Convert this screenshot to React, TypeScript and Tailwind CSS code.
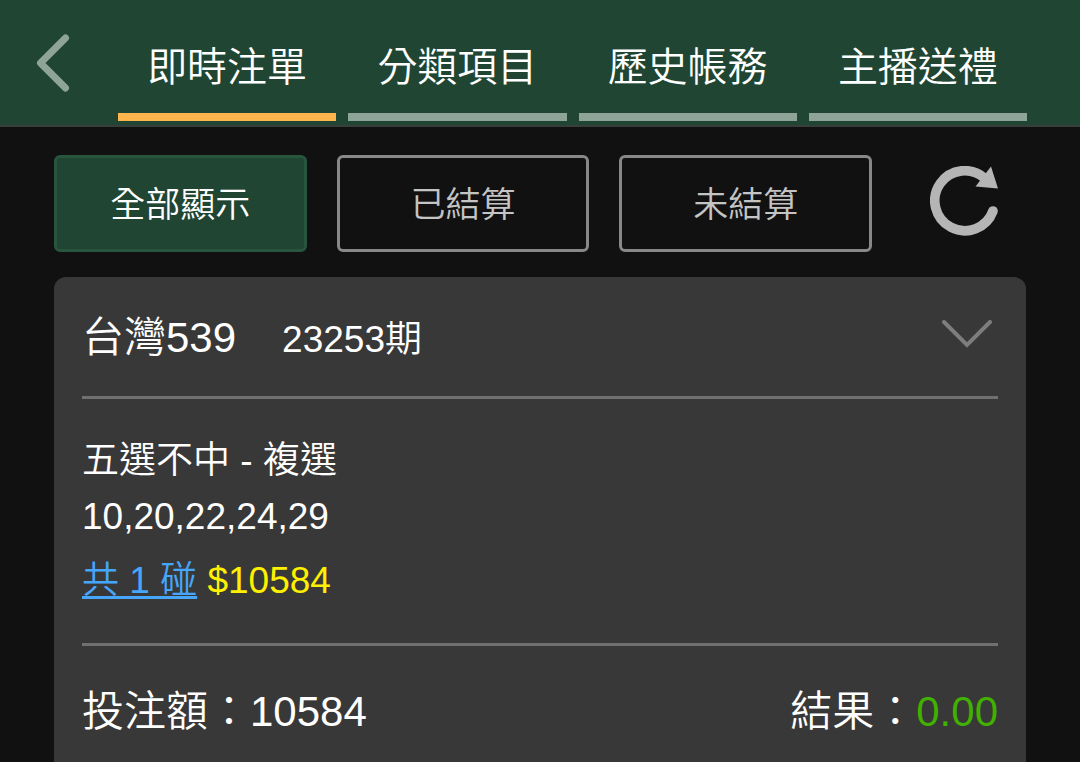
import React, { useState } from 'react';
import { clsx } from 'clsx';

const TABS = ['即時注單', '分類項目', '歷史帳務', '主播送禮'];
const FILTERS = ['全部顯示', '已結算', '未結算'];

const BackIcon = () => (
  <svg width="36" height="60" viewBox="0 0 36 60" fill="none" aria-hidden="true">
    <path d="M30.500 5 L5.500 30 L30.500 55" stroke="#8fa498" strokeWidth="7" strokeLinecap="round" strokeLinejoin="round" />
  </svg>
);

const RefreshIcon = () => (
  <svg width="68" height="70" viewBox="0 0 68 70" aria-hidden="true">
    <path d="M63 45 A30 30 0 1 1 55 12.500" fill="none" stroke="#b5b5b5" strokeWidth="9.600" />
    <circle cx="63" cy="45" r="4.800" fill="#b5b5b5" />
    <path d="M61 0.500 L68 22.500 L45.500 20.500 Z" fill="#b5b5b5" />
  </svg>
);

const ChevronIcon = () => (
  <svg width="50" height="28" viewBox="0 0 50 28" fill="none" aria-hidden="true">
    <path d="M2 2 L25 25 L48 2" stroke="#7d7d7d" strokeWidth="4" strokeLinecap="round" />
  </svg>
);

interface HeaderProps {
  active: string;
  onSelect: (tab: string) => void;
}

const Header: React.FC<HeaderProps> = ({ active, onSelect }) => (
  <header className="flex items-end border-b-2 border-[#383f3b] bg-[#204633] pr-[53px] pb-1">
    <button type="button" aria-label="返回" className="flex w-[118px] shrink-0 pb-7 pl-[35px]">
      <BackIcon />
    </button>
    <nav className="flex flex-1 gap-3">
      {TABS.map((tab) => (
        <button
          key={tab}
          type="button"
          onClick={() => onSelect(tab)}
          className={clsx(
            'flex-1 border-b-8 pt-[43px] pb-[22px] text-[40px] leading-[48px] whitespace-nowrap text-white',
            tab === active ? 'border-[#ffb54c]' : 'border-[#8fa498]',
          )}
        >
          {tab}
        </button>
      ))}
    </nav>
  </header>
);

export default function App() {
  const [tab, setTab] = useState(TABS[0]);
  const [filter, setFilter] = useState(FILTERS[0]);

  return (
    <div
      lang="zh-Hant"
      className="flex min-h-screen flex-col bg-[#111111] font-['Liberation_Sans','Noto_Sans_CJK_TC',sans-serif] font-[350] text-white"
    >
      <Header active={tab} onSelect={setTab} />

      <main className="flex flex-1 flex-col px-[54px] pt-7">
        <div className="flex items-center">
          <div className="flex flex-1 gap-[30px]">
            {FILTERS.map((name) => (
              <button
                key={name}
                type="button"
                onClick={() => setFilter(name)}
                className={clsx(
                  'h-[97px] flex-1 rounded-md border-3 pt-0.5 text-[35px] leading-[48px] whitespace-nowrap',
                  name === filter ? 'border-[#28553e] bg-[#204633] text-white' : 'border-[#888888] text-[#c4c4c4]',
                )}
              >
                {name}
              </button>
            ))}
          </div>
          <button type="button" aria-label="重新整理" className="mr-7 ml-[58px] pb-1.5">
            <RefreshIcon />
          </button>
        </div>

        <section className="mt-[25px] flex-1 rounded-t-xl bg-[#383838] px-7">
          <div className="flex items-center justify-between border-b-3 border-[#707070] pt-[33px] pb-7">
            <h2 className="flex items-baseline gap-[46px] text-[42px] leading-[56px] font-[350]">
              台灣539
              <span className="text-[37px]">23253期</span>
            </h2>
            <button type="button" aria-label="展開" className="mr-1.5 pb-2.5">
              <ChevronIcon />
            </button>
          </div>

          <div className="border-b-3 border-[#707070] pt-[34px] pb-[34px] text-[37px] leading-[56px]">
            <p>五選不中 - 複選</p>
            <p>10,20,22,24,29</p>
            <p className="pt-2">
              <a
                href="#detail"
                className="text-[#46a6fb] underline decoration-3 underline-offset-3 [text-decoration-skip-ink:none]"
              >
                共 1 碰
              </a>{' '}
              <span className="text-[#fff000]">$10584</span>
            </p>
          </div>

          <div className="flex justify-between py-[38px] text-[42px] leading-[56px]">
            <p>投注額：10584</p>
            <p>
              結果：<span className="text-[#41b000]">0.00</span>
            </p>
          </div>
        </section>
      </main>
    </div>
  );
}
